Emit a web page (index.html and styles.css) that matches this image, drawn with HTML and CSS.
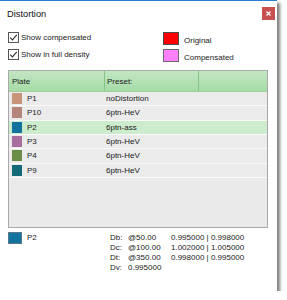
FILE: index.html
```html
<!DOCTYPE html>
<html>
<head>
<meta charset="utf-8">
<link rel="stylesheet" href="styles.css">
</head>
<body>
<div class="window">
  <div class="titlebar">
    <span class="title">Distortion</span>
    <button class="close" aria-label="Close">
      <svg width="5" height="5" viewBox="0 0 5 5"><path d="M0.5 0.5 L4.5 4.5 M4.5 0.5 L0.5 4.5" stroke="#fff" stroke-width="1.2"/></svg>
    </button>
  </div>
  <div class="options">
    <div class="checks">
      <label class="check">
        <svg width="11" height="11" viewBox="0 0 11 11"><rect x="0.5" y="0.5" width="10" height="10" fill="#fff" stroke="#555"/><path d="M2.2 5.6 L4.4 7.9 L8.8 2.8" fill="none" stroke="#333" stroke-width="1.1"/></svg>
        <span>Show compensated</span>
      </label>
      <label class="check">
        <svg width="11" height="11" viewBox="0 0 11 11"><rect x="0.5" y="0.5" width="10" height="10" fill="#fff" stroke="#555"/><path d="M2.2 5.6 L4.4 7.9 L8.8 2.8" fill="none" stroke="#333" stroke-width="1.1"/></svg>
        <span>Show in full density</span>
      </label>
    </div>
    <div class="legend">
      <div class="legend-item"><span class="legend-swatch original"></span><span class="legend-label">Original</span></div>
      <div class="legend-item"><span class="legend-swatch compensated"></span><span class="legend-label">Compensated</span></div>
    </div>
  </div>
  <div class="table">
    <div class="thead">
      <div class="th c1">Plate</div>
      <div class="th c2">Preset:</div>
      <div class="th c3"></div>
    </div>
    <div class="row"><div class="c1"><span class="swatch" style="background:#c9957a"></span>P1</div><div class="c2">noDistortion</div></div>
    <div class="row"><div class="c1"><span class="swatch" style="background:#b48578"></span>P10</div><div class="c2">6ptn-HeV</div></div>
    <div class="row selected"><div class="c1"><span class="swatch" style="background:#13739f"></span>P2</div><div class="c2">6ptn-ass</div></div>
    <div class="row"><div class="c1"><span class="swatch" style="background:#a86e9d"></span>P3</div><div class="c2">6ptn-HeV</div></div>
    <div class="row"><div class="c1"><span class="swatch" style="background:#6a8c46"></span>P4</div><div class="c2">6ptn-HeV</div></div>
    <div class="row"><div class="c1"><span class="swatch" style="background:#136b78"></span>P9</div><div class="c2">6ptn-HeV</div></div>
  </div>
  <div class="details">
    <div class="current"><span class="big-swatch"></span><span>P2</span></div>
    <div class="info">
      <span>Db:</span><span>@50.00</span><span>0.995000 | 0.998000</span>
      <span>Dc:</span><span>@100.00</span><span>1.002000 | 1.005000</span>
      <span>Dt:</span><span>@350.00</span><span>0.998000 | 0.995000</span>
      <span>Dv:</span><span class="span2">0.995000</span>
    </div>
  </div>
</div>
</body>
</html>
```

FILE: styles.css
```css
html, body {
  margin: 0;
  padding: 0;
  background: #fff;
}
body {
  font-family: "Liberation Sans", Arial, sans-serif;
  font-size: 8px;
  color: #1a1a1a;
}
.window {
  width: 277px;
  height: 290px;
  background: #fff;
  border-top: 1px solid #2a7fd4;
  box-shadow: 3px 3px 3px rgba(0, 0, 0, 0.5);
  display: flex;
  flex-direction: column;
}
.titlebar {
  height: 25px;
  display: flex;
  align-items: center;
  justify-content: space-between;
  padding: 0 2px 0 7px;
}
.title {
  font-size: 9.3px;
  color: #111;
  margin-top: 1px;
}
.close {
  width: 13px;
  height: 13px;
  margin-top: -1px;
  padding: 0;
  border: none;
  background: #c75050;
  display: flex;
  align-items: center;
  justify-content: center;
}
.close svg {
  display: block;
}
.options {
  display: flex;
  padding: 6px 0 0 8px;
}
.checks {
  width: 155px;
  display: flex;
  flex-direction: column;
  gap: 6px;
}
.check {
  display: flex;
  align-items: center;
  height: 11px;
  gap: 2px;
}
.check svg {
  display: block;
}
.legend {
  display: flex;
  flex-direction: column;
  gap: 4px;
}
.legend-item {
  display: flex;
  align-items: flex-end;
  height: 13px;
}
.legend-swatch {
  width: 14px;
  height: 11px;
  border: 1px solid #4a4a4a;
}
.legend-swatch.original {
  background: #ff0000;
}
.legend-swatch.compensated {
  background: #ff80ff;
  border-color: #6a6a6a;
}
.legend-label {
  margin-left: 5px;
  line-height: 9px;
  margin-bottom: 0;
}
.table {
  margin: 8px 0 0 8px;
  width: 258px;
  height: 156px;
  border: 1px solid #a9a9a9;
  background: #eaeaea;
}
.thead {
  display: flex;
  height: 20px;
  background: linear-gradient(#c3e7c3, #a6dba6);
  border-bottom: 1px solid #9ccf9c;
}
.th {
  display: flex;
  align-items: center;
  color: #1a1a1a;
}
.thead .c1 {
  width: 92px;
  padding-left: 3px;
  border-right: 1px solid #86c286;
}
.thead .c2 {
  width: 91px;
  padding-left: 2px;
  border-right: 1px solid #86c286;
}
.thead .c3 {
  flex: 1;
}
.row {
  display: flex;
  align-items: center;
  height: 13.33px;
  border-bottom: 1px solid #fafafa;
  background: #ebebeb;
}
.row.selected {
  background: #cdebcd;
}
.row .c1 {
  width: 94px;
  display: flex;
  align-items: center;
  padding-left: 3px;
}
.row .c2 {
  padding-left: 0;
}
.swatch {
  width: 10px;
  height: 11px;
  margin-right: 5px;
}
.details {
  display: flex;
  padding: 4px 0 0 8px;
}
.current {
  width: 102px;
  display: flex;
  align-items: flex-start;
}
.current span:last-child {
  margin-left: 5px;
  line-height: 10px;
  margin-top: 1px;
}
.big-swatch {
  width: 12px;
  height: 10px;
  background: #13739f;
  border: 1px solid #5a7a88;
}
.info {
  display: grid;
  grid-template-columns: 18px 43px auto;
  line-height: 10px;
  margin-top: 1px;
  white-space: pre;
}
.info .span2 {
  grid-column: 2 / span 2;
}
```
